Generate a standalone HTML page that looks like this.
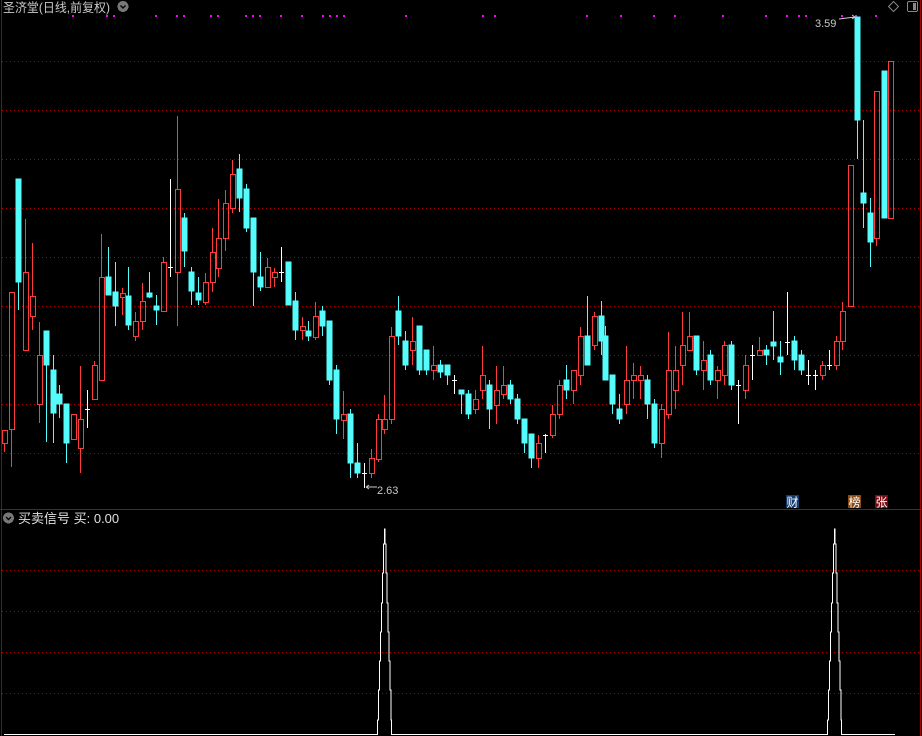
<!DOCTYPE html>
<html><head><meta charset="utf-8"><style>
html,body{margin:0;padding:0;background:#000;width:922px;height:736px;overflow:hidden}
svg{display:block}
text{font-family:"Liberation Sans","Noto Sans CJK SC",sans-serif}
</style></head><body>
<svg width="922" height="736" viewBox="0 0 922 736" xmlns="http://www.w3.org/2000/svg" shape-rendering="crispEdges">
<g stroke="#b00000" stroke-dasharray="1 3" stroke-width="1">
<path d="M2 61.5H920M2 110.5H920M2 159.5H920M2 208.5H920M2 257.5H920M2 306.5H920M2 355.5H920M2 404.5H920M2 453.5H920"/>
<path d="M2 570.5H920M2 611.5H920M2 652.5H920M2 693.5H920"/>
</g>
<path d="M0 509.5H922M920.5 0V736" stroke="#b00000"/>
<path d="M1.5 0V736" stroke="#303030"/>
<text x="3" y="12" font-size="12.5" fill="#c8c8c8" textLength="107" lengthAdjust="spacingAndGlyphs">圣济堂(日线,前复权)</text>
<circle cx="123" cy="6.5" r="5.5" fill="#777"/><path d="M120.5 5.5l2.5 2.5 2.5-2.5" stroke="#000" stroke-width="1.4" fill="none" shape-rendering="auto"/>
<path d="M893.5 1.5l5 5-5 5-5-5z" stroke="#888" fill="none" shape-rendering="auto"/>
<rect x="907.5" y="1.5" width="10" height="10" rx="1.5" stroke="#888" fill="none"/><rect x="913" y="3" width="3" height="7" fill="#888"/>
<g fill="#ff00ff">
<rect x="72" y="15" width="2" height="2"/><rect x="106" y="15" width="2" height="2"/><rect x="113" y="15" width="2" height="2"/><rect x="155" y="15" width="2" height="2"/><rect x="176" y="15" width="2" height="2"/><rect x="183" y="15" width="2" height="2"/><rect x="210" y="15" width="2" height="2"/><rect x="217" y="15" width="2" height="2"/><rect x="245" y="15" width="2" height="2"/><rect x="252" y="15" width="2" height="2"/><rect x="259" y="15" width="2" height="2"/><rect x="280" y="15" width="2" height="2"/><rect x="301" y="15" width="2" height="2"/><rect x="322" y="15" width="2" height="2"/><rect x="329" y="15" width="2" height="2"/><rect x="336" y="15" width="2" height="2"/><rect x="343" y="15" width="2" height="2"/><rect x="405" y="15" width="2" height="2"/><rect x="482" y="15" width="2" height="2"/><rect x="494" y="15" width="2" height="2"/><rect x="586" y="15" width="2" height="2"/><rect x="620" y="15" width="2" height="2"/><rect x="653" y="15" width="2" height="2"/><rect x="674" y="15" width="2" height="2"/><rect x="722" y="15" width="2" height="2"/><rect x="765" y="15" width="2" height="2"/><rect x="786" y="15" width="2" height="2"/><rect x="798" y="15" width="2" height="2"/><rect x="805" y="15" width="2" height="2"/><rect x="841" y="15" width="2" height="2"/><rect x="855" y="15" width="2" height="2"/><rect x="875" y="15" width="2" height="2"/>
</g>
<g stroke="#54fcfc" fill="#54fcfc">
<path d="M18.5 179V310M46.5 331V442M53.5 355V443M59.5 385V418M66.5 404V463M108.5 247V295M115.5 262V326M128.5 267V330M149.5 272V298M156.5 295V325M184.5 213V267M191.5 267V305M198.5 277V305M239.5 154V212M246.5 184V232M253.5 218V306M260.5 252V291M288.5 262V305M295.5 292V340M308.5 321V341M322.5 306V336M329.5 321V385M336.5 365V434M350.5 409V478M357.5 443V478M398.5 296V345M405.5 331V370M419.5 326V375M426.5 350V375M440.5 360V378M447.5 365V385M461.5 390V414M468.5 390V419M489.5 380V429M510.5 380V404M517.5 394V424M524.5 419V453M531.5 434V468M566.5 365V399M587.5 296V360M601.5 301V355M605.5 326V380M612.5 375V414M619.5 394V424M647.5 375V419M654.5 399V448M696.5 336V375M710.5 350V385M731.5 341V390M766.5 345V365M773.5 311V360M780.5 341V375M794.5 336V370M801.5 350V375M857.5 17V159M863.5 120V228M870.5 198V267M884.5 71V218"/>
<rect x="16" y="179" width="5" height="103"/><rect x="44" y="331" width="5" height="34"/><rect x="51" y="370" width="5" height="43"/><rect x="57" y="394" width="5" height="10"/><rect x="64" y="404" width="5" height="39"/><rect x="106" y="277" width="5" height="18"/><rect x="113" y="292" width="5" height="14"/><rect x="126" y="296" width="5" height="29"/><rect x="147" y="293" width="5" height="4"/><rect x="154" y="306" width="5" height="4"/><rect x="182" y="218" width="5" height="33"/><rect x="189" y="272" width="5" height="19"/><rect x="196" y="293" width="5" height="7"/><rect x="237" y="169" width="5" height="29"/><rect x="244" y="189" width="5" height="39"/><rect x="251" y="218" width="5" height="54"/><rect x="258" y="277" width="5" height="10"/><rect x="286" y="262" width="5" height="43"/><rect x="293" y="301" width="5" height="29"/><rect x="306" y="331" width="5" height="5"/><rect x="320" y="311" width="5" height="15"/><rect x="327" y="321" width="5" height="59"/><rect x="334" y="370" width="5" height="49"/><rect x="348" y="414" width="5" height="49"/><rect x="355" y="463" width="5" height="10"/><rect x="396" y="311" width="5" height="25"/><rect x="403" y="341" width="5" height="24"/><rect x="417" y="326" width="5" height="44"/><rect x="424" y="350" width="5" height="20"/><rect x="438" y="365" width="5" height="7"/><rect x="445" y="365" width="5" height="10"/><rect x="459" y="390" width="5" height="4"/><rect x="466" y="394" width="5" height="20"/><rect x="487" y="385" width="5" height="24"/><rect x="508" y="385" width="5" height="14"/><rect x="515" y="399" width="5" height="20"/><rect x="522" y="419" width="5" height="24"/><rect x="529" y="434" width="5" height="24"/><rect x="564" y="380" width="5" height="10"/><rect x="585" y="336" width="5" height="29"/><rect x="599" y="316" width="5" height="25"/><rect x="603" y="336" width="5" height="44"/><rect x="610" y="375" width="5" height="29"/><rect x="617" y="409" width="5" height="10"/><rect x="645" y="380" width="5" height="24"/><rect x="652" y="404" width="5" height="39"/><rect x="694" y="336" width="5" height="34"/><rect x="708" y="355" width="5" height="25"/><rect x="729" y="345" width="5" height="40"/><rect x="764" y="350" width="5" height="5"/><rect x="771" y="342" width="5" height="4"/><rect x="778" y="357" width="5" height="5"/><rect x="792" y="341" width="5" height="19"/><rect x="799" y="355" width="5" height="15"/><rect x="855" y="17" width="5" height="103"/><rect x="861" y="193" width="5" height="10"/><rect x="868" y="213" width="5" height="29"/><rect x="882" y="71" width="5" height="147"/>
</g>
<g stroke="#ff3c3c" fill="none">
<path d="M4.5 443V452M11.5 429V467M25.5 219V272M32.5 243V296M32.5 316V330M39.5 322V355M39.5 404V423M80.5 366V419M80.5 448V473M94.5 361V365M101.5 234V277M122.5 288V293M122.5 297V315M135.5 312V321M135.5 336V341M142.5 283V301M142.5 321V330M163.5 257V262M177.5 116V189M177.5 272V326M205.5 273V282M205.5 302V305M212.5 228V252M212.5 282V292M218.5 199V238M218.5 268V277M225.5 190V203M225.5 238V251M232.5 160V174M232.5 208V213M267.5 258V267M274.5 268V272M274.5 277V287M302.5 317V326M302.5 330V340M315.5 302V316M315.5 337V340M343.5 391V414M343.5 420V439M371.5 449V458M371.5 473V478M378.5 414V419M378.5 459V462M384.5 395V419M384.5 429V434M391.5 327V336M391.5 419V424M412.5 317V341M412.5 350V365M433.5 346V365M433.5 370V380M475.5 390V399M475.5 409V414M482.5 346V375M482.5 390V399M496.5 366V390M496.5 405V424M503.5 366V385M503.5 394V399M538.5 435V443M538.5 458V468M552.5 405V414M552.5 435V438M559.5 380V385M559.5 414V419M573.5 390V404M580.5 327V336M580.5 375V385M594.5 312V316M594.5 345V350M626.5 346V380M626.5 404V414M633.5 363V375M633.5 380V399M640.5 366V375M640.5 380V399M661.5 404V409M661.5 443V458M668.5 332V370M668.5 414V419M675.5 346V370M675.5 390V409M682.5 312V345M682.5 365V385M689.5 312V336M703.5 341V360M703.5 370V390M717.5 366V370M717.5 380V399M724.5 341V345M724.5 375V385M745.5 355V365M745.5 390V399M759.5 337V350M822.5 361V365M822.5 375V380M836.5 336V341M836.5 365V370M842.5 302V311M842.5 341V350M876.5 238V246"/>
<g transform="translate(0.5 0.5)">
<rect x="2" y="430" width="5" height="13"/><rect x="9" y="292" width="5" height="137"/><rect x="23" y="272" width="5" height="78"/><rect x="30" y="296" width="5" height="20"/><rect x="37" y="355" width="5" height="49"/><rect x="71" y="414" width="5" height="25"/><rect x="78" y="419" width="5" height="29"/><rect x="92" y="365" width="5" height="34"/><rect x="99" y="277" width="5" height="103"/><rect x="120" y="293" width="5" height="4"/><rect x="133" y="321" width="5" height="15"/><rect x="140" y="301" width="5" height="20"/><rect x="161" y="262" width="5" height="49"/><rect x="175" y="189" width="5" height="83"/><rect x="203" y="282" width="5" height="20"/><rect x="210" y="252" width="5" height="30"/><rect x="216" y="238" width="5" height="30"/><rect x="223" y="203" width="5" height="35"/><rect x="230" y="174" width="5" height="34"/><rect x="265" y="267" width="5" height="20"/><rect x="272" y="272" width="5" height="5"/><rect x="300" y="326" width="5" height="4"/><rect x="313" y="316" width="5" height="21"/><rect x="341" y="414" width="5" height="6"/><rect x="369" y="458" width="5" height="15"/><rect x="376" y="419" width="5" height="40"/><rect x="382" y="419" width="5" height="10"/><rect x="389" y="336" width="5" height="83"/><rect x="410" y="341" width="5" height="9"/><rect x="431" y="365" width="5" height="5"/><rect x="473" y="399" width="5" height="10"/><rect x="480" y="375" width="5" height="15"/><rect x="494" y="390" width="5" height="15"/><rect x="501" y="385" width="5" height="9"/><rect x="536" y="443" width="5" height="15"/><rect x="550" y="414" width="5" height="21"/><rect x="557" y="385" width="5" height="29"/><rect x="571" y="370" width="5" height="20"/><rect x="578" y="336" width="5" height="39"/><rect x="592" y="316" width="5" height="29"/><rect x="624" y="380" width="5" height="24"/><rect x="631" y="375" width="5" height="5"/><rect x="638" y="375" width="5" height="5"/><rect x="659" y="409" width="5" height="34"/><rect x="666" y="370" width="5" height="44"/><rect x="673" y="370" width="5" height="20"/><rect x="680" y="345" width="5" height="20"/><rect x="687" y="336" width="5" height="14"/><rect x="701" y="360" width="5" height="10"/><rect x="715" y="370" width="5" height="10"/><rect x="722" y="345" width="5" height="30"/><rect x="743" y="365" width="5" height="25"/><rect x="757" y="350" width="5" height="5"/><rect x="820" y="365" width="5" height="10"/><rect x="834" y="341" width="5" height="24"/><rect x="840" y="311" width="5" height="30"/><rect x="848" y="165" width="5" height="141"/><rect x="874" y="91" width="5" height="147"/><rect x="888" y="61" width="5" height="157"/>
</g>
</g>
<g stroke="#fff">
<path d="M87.5 390V428M85 409.5H90M170.5 179V277M168 267.5H173M281.5 247V282M279 272.5H284M364.5 463V488M362 473.5H367M454.5 375V394M452 380.5H457M545.5 434V453M543 435.5H548M738.5 380V424M736 385.5H741M752.5 345V380M750 355.5H755M787.5 292V355M785 342.5H790M808.5 360V385M806 375.5H811M815.5 370V390M813 375.5H818M829.5 350V370M827 365.5H832"/>
</g>
<g stroke="#ccc" fill="none" shape-rendering="auto"><path d="M366 487H377M366 487l3-2M366 487l3 2M839 19L855 17M855 17l-3-2M855 17l-3 2"/></g>
<text x="377" y="494" font-size="11" fill="#c8c8c8">2.63</text>
<text x="815" y="27" font-size="11" fill="#c8c8c8">3.59</text>
<rect x="786" y="495" width="13" height="13" fill="#153c6e"/><text x="786.5" y="506.5" font-size="12" fill="#fff">财</text>
<rect x="848" y="495" width="13" height="13" fill="#8a4a10"/><text x="848.5" y="506.5" font-size="12" fill="#fff">榜</text>
<rect x="875" y="495" width="13" height="13" fill="#7a0a10"/><text x="875.5" y="506.5" font-size="12" fill="#fff">张</text>
<circle cx="8.5" cy="518" r="5.5" fill="#777"/><path d="M6 517l2.5 2.5 2.5-2.5" stroke="#000" stroke-width="1.4" fill="none" shape-rendering="auto"/>
<text x="18" y="523" font-size="13" fill="#e0e0e0">买卖信号 买: 0.00</text>
<g stroke="#fff" fill="none" stroke-width="1">
<path d="M4 734.5H377.5V720H378.5V690H379.5V661H380.5V632H381.5V603H382.5V573H383.5V544H384.5V529H385V544H386V573H387V603H388V632H389V661H390V690H391V720H391.5V734.5H827.5V720H828.5V690H829.5V661H830.5V632H831.5V603H832.5V573H833.5V544H834.5V529H835V544H836V573H837V603H838V632H839V661H840V690H841V720H841.5V734.5H895"/>
</g>
</svg>
</body></html>
